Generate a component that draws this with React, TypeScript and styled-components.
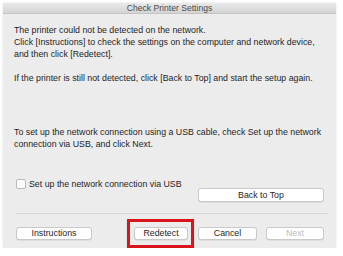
import React from "react";
import styled, { createGlobalStyle } from "styled-components";

const Global = createGlobalStyle`
  html, body { margin: 0; padding: 0; background: #ffffff; }
  body { font-family: "Liberation Sans", Arial, Helvetica, sans-serif; }
`;

const Page = styled.div`
  padding: 3px 0 0 3px;
`;

const Window = styled.div`
  width: 333px;
  height: 245px;
  background: #ececec;
  display: flex;
  flex-direction: column;
  box-shadow: 0 0 2px rgba(0, 0, 0, 0.12);
`;

const TitleBar = styled.div`
  height: 14px;
  display: flex;
  align-items: center;
  justify-content: center;
  background: linear-gradient(#e9e9e9, #d4d4d4);
  border-bottom: 1px solid #c4c4c4;
  font-size: 8.6px;
  color: #4a4a4a;
`;

const Content = styled.div`
  flex: 1;
  display: flex;
  flex-direction: column;
  padding: 10px 8px 0 11px;
  font-size: 8.8px;
  line-height: 12px;
  color: #1e1e1e;
`;

const Message = styled.p<{ $top?: number; $gap?: number }>`
  margin: ${(p) => p.$top ?? 0}px 0 ${(p) => p.$gap ?? 0}px 0;
`;

const OptionRow = styled.label`
  display: flex;
  align-items: center;
  gap: 3px;
  margin: 28px 0 0 2px;
  height: 12px;
`;

const Box = styled.span`
  width: 8px;
  height: 8px;
  border: 1px solid #b9b9b9;
  border-radius: 2px;
  background: #ffffff;
`;

const BackRow = styled.div`
  display: flex;
  justify-content: flex-end;
  margin: -2px 4px 0 0;
`;

const Button = styled.button<{ $w: number; $h?: number; $disabled?: boolean }>`
  width: ${(p) => p.$w}px;
  height: ${(p) => p.$h ?? 13}px;
  padding: 0;
  margin: 0;
  border: 1px solid #c9c9c9;
  border-radius: 3px;
  background: #ffffff;
  box-shadow: 0 0.5px 0.5px rgba(0, 0, 0, 0.12);
  font-family: "Liberation Sans", Arial, sans-serif;
  font-size: 8.8px;
  line-height: 1;
  color: ${(p) => (p.$disabled ? "#bdbdbd" : "#1e1e1e")};
  display: flex;
  align-items: center;
  justify-content: center;
`;

const Divider = styled.div`
  height: 1px;
  background: #d6d6d6;
  margin: 11px 0 0 2px;
`;

const ButtonRow = styled.div`
  display: flex;
  align-items: center;
  margin: 5px 0 0 2px;
`;

const Highlight = styled.div`
  display: flex;
  border: 3px solid #d9141c;
  padding: 5px 3px 5px 4px;
  margin-left: 35px;
  box-shadow: 0 1px 1px rgba(0, 0, 0, 0.25);
`;

const Spacer = styled.div<{ $w: number }>`
  width: ${(p) => p.$w}px;
  flex: none;
`;

export default function App() {
  return (
    <>
      <Global />
      <Page>
        <Window>
          <TitleBar>Check Printer Settings</TitleBar>
          <Content>
            <Message $gap={12}>
              The printer could not be detected on the network.
              <br />
              Click [Instructions] to check the settings on the computer and network device,
              <br />
              and then click [Redetect].
            </Message>
            <Message>
              If the printer is still not detected, click [Back to Top] and start the setup again.
            </Message>
            <Message $top={42}>
              To set up the network connection using a USB cable, check Set up the network
              <br />
              connection via USB, and click Next.
            </Message>
            <OptionRow>
              <Box />
              Set up the network connection via USB
            </OptionRow>
            <BackRow>
              <Button $w={126} $h={14}>Back to Top</Button>
            </BackRow>
            <Divider />
            <ButtonRow>
              <Button $w={76}>Instructions</Button>
              <Highlight>
                <Button $w={54}>Redetect</Button>
              </Highlight>
              <Spacer $w={4} />
              <Button $w={59}>Cancel</Button>
              <Spacer $w={9} />
              <Button $w={58} $disabled>Next</Button>
            </ButtonRow>
          </Content>
        </Window>
      </Page>
    </>
  );
}
